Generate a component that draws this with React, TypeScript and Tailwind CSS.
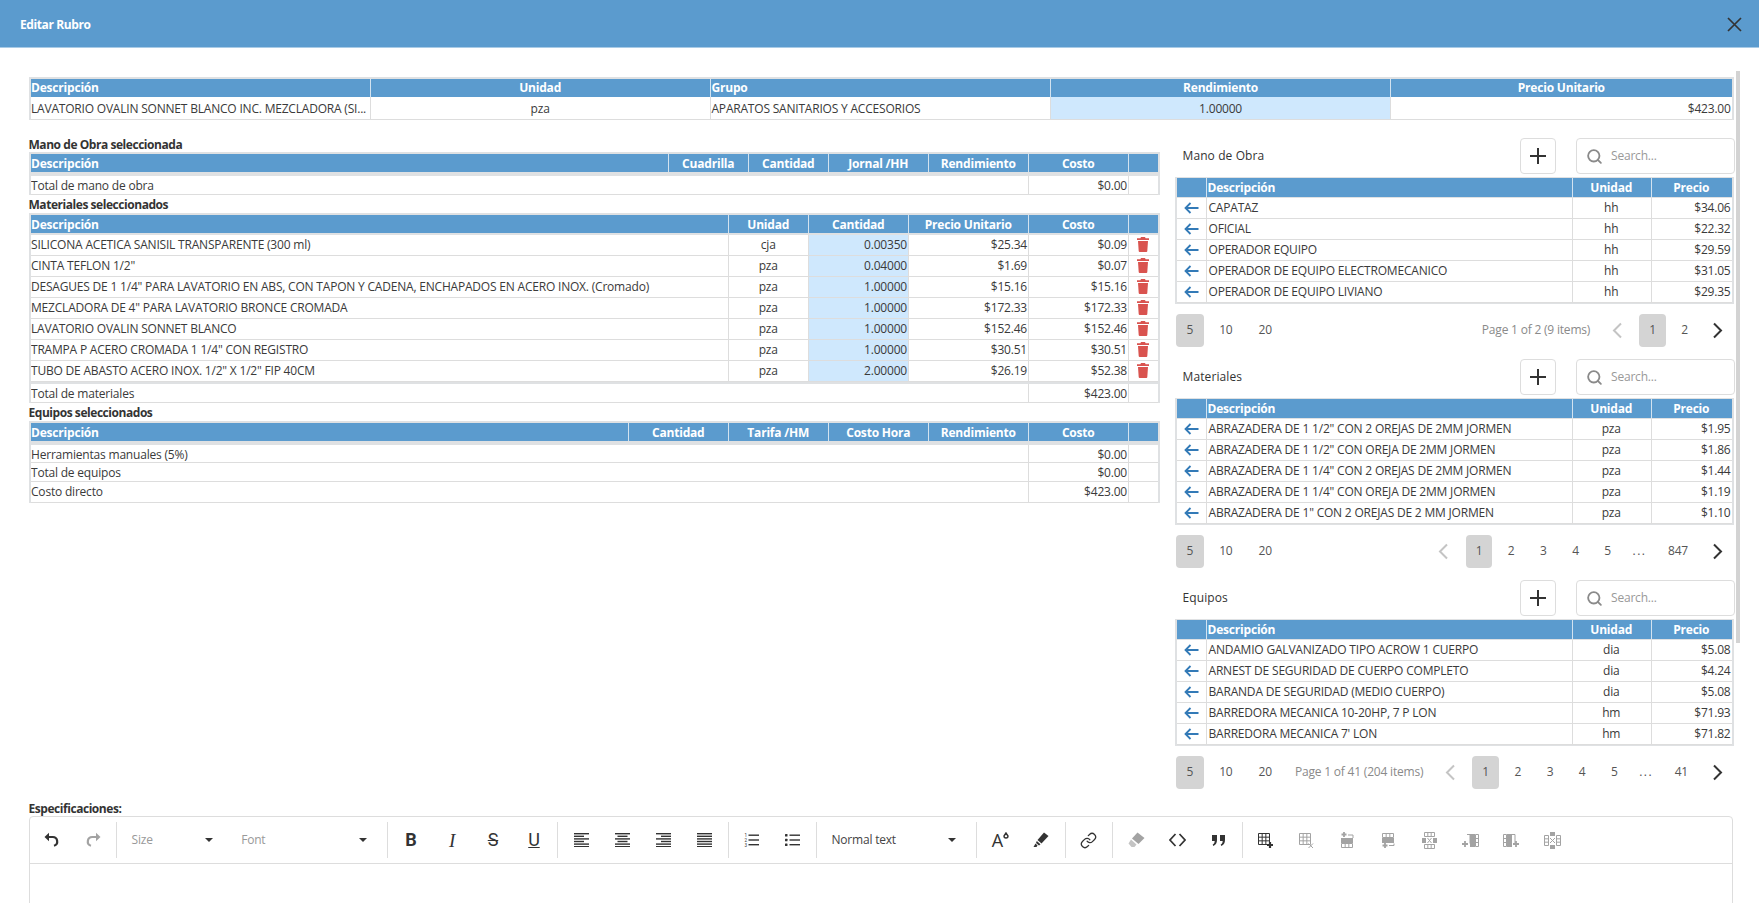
import { Link, Search } from 'lucide-react';
import type { ReactNode } from 'react';

const headBlue = 'bg-[#5b9bce]';

function Th({ children, left, last }: { children?: ReactNode; left?: boolean; last?: boolean }) {
  return (
    <th
      className={`h-[18.500px] ${headBlue} overflow-hidden whitespace-nowrap pb-0 pl-[0.500px] pr-[1px] pt-[1px] text-[12px] font-bold leading-none text-white ${left ? 'text-left' : 'text-center'} ${last ? '' : 'border-r border-[#d3e3f0]'}`}
    >
      {children}
    </th>
  );
}

function Td({
  children,
  align = 'left',
  edit,
  last,
  span,
  h = 'h-[21px] pt-0',
}: {
  children?: ReactNode;
  align?: 'left' | 'center' | 'right';
  edit?: boolean;
  last?: boolean;
  span?: number;
  h?: string;
}) {
  const alignClass = align === 'left' ? 'text-left' : align === 'center' ? 'text-center' : 'text-right';
  return (
    <td
      colSpan={span}
      className={`${h} overflow-hidden whitespace-nowrap border-b border-[#dddddd] pb-0 pl-[0.500px] pr-[1px] leading-none ${alignClass} ${last ? '' : 'border-r'} ${edit ? 'bg-[#cfe8fd]' : 'bg-white'}`}
    >
      {children}
    </td>
  );
}

function Bar({ span, h }: { span: number; h: string }) {
  return (
    <tr>
      <td colSpan={span} className={`${h} bg-[#dfe1e3] p-0`} />
    </tr>
  );
}

function Cols({ widths }: { widths: (number | null)[] }) {
  return (
    <colgroup>
      {widths.map((w, i) => (
        <col key={i} style={w ? { width: w } : undefined} />
      ))}
    </colgroup>
  );
}

function TableBox({ children, pad }: { children: ReactNode; pad?: boolean }) {
  return (
    <div className={`border-x-2 border-[#dfe1e3] bg-[#dfe1e3] pt-[1.500px] ${pad ? 'pb-[1px]' : ''}`}>
      <table className="w-full table-fixed border-separate border-spacing-0">{children}</table>
    </div>
  );
}

function Title({ children, h }: { children: ReactNode; h: string }) {
  return <div className={`${h} flex items-center text-[12px] font-bold leading-none tracking-[-0.450px] text-[#333]`}>{children}</div>;
}

function Trash() {
  return (
    <svg width="12" height="15" viewBox="0 0 12 15" className="mx-auto block" fill="#d9534f">
      <path d="M4 0h4l.6 1.2H12v1.8H0V1.2h3.4z" />
      <path d="M1 4h10l-.7 10a1 1 0 0 1-1 1H2.700a1 1 0 0 1-1-1z" />
    </svg>
  );
}

function BackArrow() {
  return (
    <svg width="15" height="12" viewBox="0 0 15 12" className="mx-auto block" fill="none" stroke="#337ab7" strokeWidth="1.800">
      <path d="M14.500 6H1.500M6.500 1 1.500 6l5 5" />
    </svg>
  );
}

function Chevron({ right, muted }: { right?: boolean; muted?: boolean }) {
  return (
    <span className={`flex h-[33px] w-[27px] items-center justify-center ${right ? '' : 'mr-[3px]'}`}>
      <svg width="11" height="17" viewBox="0 0 11 17" fill="none" stroke={muted ? '#c4c4c4' : '#333333'} strokeWidth="2">
        <path d={right ? 'M2 1.500 9 8.500 2 15.500' : 'M9 1.500 2 8.500 9 15.500'} />
      </svg>
    </span>
  );
}

function Pager({ info, pages, last }: { info?: string; pages?: string[]; last: string }) {
  const list = pages ?? ['1', '2'];
  return (
    <div className="mt-[10px] flex h-[33px] items-center justify-between pl-[1px] pr-[4.500px]">
      <div className="flex items-center gap-[5px] text-[#555]">
        <span className="flex h-[33px] items-center rounded-[4px] bg-[#d4d4d4] px-[10.500px]">5</span>
        <span className="px-[10.500px]">10</span>
        <span className="px-[10.500px]">20</span>
      </div>
      <div className="flex items-center gap-[5.500px] text-[#555]">
        {info && <span className="mr-[8px] text-[#8a8a8a]">{info}</span>}
        <Chevron muted />
        {list.map((p, i) => (
          <span key={p} className={`flex h-[33px] items-center rounded-[4px] px-[10px] ${i === 0 ? 'bg-[#d4d4d4]' : ''}`}>
            {p}
          </span>
        ))}
        {pages && <span className="w-[26px] text-center tracking-[1.500px]">...</span>}
        {pages && <span className="px-[10px]">{last}</span>}
        <Chevron right />
      </div>
    </div>
  );
}

function Catalog({
  title,
  rows,
  info,
  pages,
  last = '',
}: {
  title: string;
  rows: [string, string, string][];
  info?: string;
  pages?: string[];
  last?: string;
}) {
  return (
    <section className="mb-[12.500px] w-[560px]">
      <div className="flex h-[35.500px] items-center">
        <span className="flex-1 pl-[7.500px] tracking-[0.100px] text-[#333]">{title}</span>
        <button className="flex h-[35.500px] w-[35.500px] items-center justify-center rounded-[4px] border border-[#dddddd]">
          <svg width="16" height="16" viewBox="0 0 16 16" stroke="#333333" strokeWidth="2">
            <path d="M8 0v16M0 8h16" />
          </svg>
        </button>
        <div className="ml-[20.500px] flex h-[35.500px] w-[159px] items-center rounded-[4px] border border-[#dddddd] pl-[9px]">
          <Search size={17} color="#8a8a8a" strokeWidth={2.600} />
          <span className="ml-[8px] text-[#999]">Search...</span>
        </div>
      </div>
      <div className="mt-[3px] w-[558.500px]">
        <TableBox pad>
          <Cols widths={[30, null, 79, 80]} />
          <thead>
            <tr>
              <Th />
              <Th left>Descripción</Th>
              <Th>Unidad</Th>
              <Th last>Precio</Th>
            </tr>
          </thead>
          <tbody>
            <Bar span={4} h="h-[1px]" />
            {rows.map((r) => (
              <tr key={r[0]}>
                <Td>
                  <BackArrow />
                </Td>
                <Td>
                  <span className="ml-[1px]">{r[0]}</span>
                </Td>
                <Td align="center">{r[1]}</Td>
                <Td align="right" last>
                  {r[2]}
                </Td>
              </tr>
            ))}
          </tbody>
        </TableBox>
      </div>
      <Pager info={info} pages={pages} last={last} />
    </section>
  );
}

const materials: [string, string, string, string, string][] = [
  ['SILICONA ACETICA SANISIL TRANSPARENTE (300 ml)', 'cja', '0.00350', '$25.34', '$0.09'],
  ['CINTA TEFLON 1/2"', 'pza', '0.04000', '$1.69', '$0.07'],
  ['DESAGUES DE 1 1/4" PARA LAVATORIO EN ABS, CON TAPON Y CADENA, ENCHAPADOS EN ACERO INOX. (Cromado)', 'pza', '1.00000', '$15.16', '$15.16'],
  ['MEZCLADORA DE 4" PARA LAVATORIO BRONCE CROMADA', 'pza', '1.00000', '$172.33', '$172.33'],
  ['LAVATORIO OVALIN SONNET BLANCO', 'pza', '1.00000', '$152.46', '$152.46'],
  ['TRAMPA P ACERO CROMADA 1 1/4" CON REGISTRO', 'pza', '1.00000', '$30.51', '$30.51'],
  ['TUBO DE ABASTO ACERO INOX. 1/2" X 1/2" FIP 40CM', 'pza', '2.00000', '$26.19', '$52.38'],
];

const labor: [string, string, string][] = [
  ['CAPATAZ', 'hh', '$34.06'],
  ['OFICIAL', 'hh', '$22.32'],
  ['OPERADOR EQUIPO', 'hh', '$29.59'],
  ['OPERADOR DE EQUIPO ELECTROMECANICO', 'hh', '$31.05'],
  ['OPERADOR DE EQUIPO LIVIANO', 'hh', '$29.35'],
];

const catalogMaterials: [string, string, string][] = [
  ['ABRAZADERA DE 1 1/2" CON 2 OREJAS DE 2MM JORMEN', 'pza', '$1.95'],
  ['ABRAZADERA DE 1 1/2" CON OREJA DE 2MM JORMEN', 'pza', '$1.86'],
  ['ABRAZADERA DE 1 1/4" CON 2 OREJAS DE 2MM JORMEN', 'pza', '$1.44'],
  ['ABRAZADERA DE 1 1/4" CON OREJA DE 2MM JORMEN', 'pza', '$1.19'],
  ['ABRAZADERA DE 1" CON 2 OREJAS DE 2 MM JORMEN', 'pza', '$1.10'],
];

const equipment: [string, string, string][] = [
  ['ANDAMIO GALVANIZADO TIPO ACROW 1 CUERPO', 'dia', '$5.08'],
  ['ARNEST DE SEGURIDAD DE CUERPO COMPLETO', 'dia', '$4.24'],
  ['BARANDA DE SEGURIDAD (MEDIO CUERPO)', 'dia', '$5.08'],
  ['BARREDORA MECANICA 10-20HP, 7 P LON', 'hm', '$71.93'],
  ["BARREDORA MECANICA 7' LON", 'hm', '$71.82'],
];

function Tool({ children }: { children: ReactNode }) {
  return <span className="mx-[2.500px] flex h-[36px] w-[36px] shrink-0 items-center justify-center text-[#333]">{children}</span>;
}

function Sep() {
  return <span className="mx-[2.750px] h-[36px] w-px shrink-0 bg-[#dddddd]" />;
}

function Select({ label, w, dark }: { label: string; w: string; dark?: boolean }) {
  return (
    <span className={`flex h-[36px] shrink-0 items-center justify-between pl-[11.500px] pr-[17px] ${w} ${dark ? 'text-[#444]' : 'text-[#999]'}`}>
      {label}
      <svg width="8" height="4" viewBox="0 0 8 4" fill="#333333">
        <path d="M0 0h8L4 4z" />
      </svg>
    </span>
  );
}

function Lines({ rows }: { rows: [number, number][] }) {
  return (
    <svg width="15" height="14" viewBox="0 0 15 14" fill="#333333">
      {rows.map(([x, w], i) => (
        <rect key={i} x={x} y={i * 2.600} width={w} height="1.400" />
      ))}
    </svg>
  );
}

function TableIcon({ kind, muted }: { kind: number; muted?: boolean }) {
  const c = muted ? '#a3a3a3' : '#333333';
  const grid = (x: number, y: number, w: number, h: number, cols: number, rows: number) => {
    const p: string[] = [`M${x} ${y}h${w}v${h}h${-w}z`];
    for (let i = 1; i < cols; i++) p.push(`M${x + (w * i) / cols} ${y}v${h}`);
    for (let i = 1; i < rows; i++) p.push(`M${x} ${y + (h * i) / rows}h${w}`);
    return p.join('');
  };
  return (
    <svg width="17" height="17" viewBox="0 0 17 17" fill="none" stroke={c} strokeWidth="1">
      {kind === 0 && (
        <>
          <path d={grid(1.500, 1.500, 11, 11, 3, 3)} />
          <path d="M13 10v6M10 13h6" strokeWidth="2.200" />
        </>
      )}
      {kind === 1 && (
        <>
          <path d={grid(1.500, 1.500, 11, 11, 3, 3)} />
          <path d="M10.500 11.500l4.500 4.500M15 11.500l-4.500 4.500" stroke="#a3a3a3" />
        </>
      )}
      {kind === 2 && (
        <>
          <path d="M5 0v5M2.500 2.500h5" strokeWidth="1.800" />
          <path d="M9 3h5v3" />
          <rect x="2" y="6" width="12" height="5" fill={c} stroke="none" />
          <path d={grid(2.500, 11.500, 11, 4, 3, 1)} />
        </>
      )}
      {kind === 3 && (
        <>
          <path d={grid(2.500, 1.500, 11, 4, 3, 1)} />
          <rect x="2" y="6" width="12" height="5" fill={c} stroke="none" />
          <path d="M5 11v5M2.500 13.500h5" strokeWidth="1.800" />
          <path d="M9 13.500h5v-2" />
        </>
      )}
      {kind === 4 && (
        <>
          <path d={grid(3.500, 0.500, 10, 4, 3, 1)} />
          <path d={grid(3.500, 12.500, 10, 4, 3, 1)} />
          <rect x="1" y="6" width="4" height="5" fill={c} stroke="none" />
          <rect x="12" y="6" width="4" height="5" fill={c} stroke="none" />
          <path d="M6.500 6l4 5M10.500 6l-4 5" />
        </>
      )}
      {kind === 5 && (
        <>
          <path d="M5 2.500h3v9" />
          <path d="M3 9v6M0 12h6" strokeWidth="1.800" />
          <rect x="8" y="2" width="5" height="13" fill={c} stroke="none" />
          <path d={grid(13.500, 2.500, 3, 12, 1, 3)} />
        </>
      )}
      {kind === 6 && (
        <>
          <path d={grid(0.500, 2.500, 3, 12, 1, 3)} />
          <rect x="4" y="2" width="5" height="13" fill={c} stroke="none" />
          <path d="M9 2.500h3v9" />
          <path d="M13 9v6M10 12h6" strokeWidth="1.800" />
        </>
      )}
      {kind === 7 && (
        <>
          <path d={grid(0.500, 3.500, 4, 10, 1, 3)} />
          <path d={grid(12.500, 3.500, 4, 10, 1, 3)} />
          <rect x="6" y="0" width="5" height="4" fill={c} stroke="none" />
          <rect x="6" y="13" width="5" height="4" fill={c} stroke="none" />
          <path d="M6 6l5 5M11 6l-5 5" />
        </>
      )}
    </svg>
  );
}

function Toolbar() {
  return (
    <div className="flex h-[47px] items-center border-b border-[#dddddd] pl-[2px]">
      <Tool>
        <svg width="16" height="16" viewBox="0 0 16 16" fill="none" stroke="#333333" strokeWidth="2.200">
          <path d="M4.500 5H8.500a4.500 4.500 0 0 1 1.500 8.800" />
          <path d="M0.500 5l4.500-4.300v8.600z" fill="#333333" stroke="none" />
        </svg>
      </Tool>
      <Tool>
        <svg width="16" height="16" viewBox="0 0 16 16" fill="none" stroke="#a3a3a3" strokeWidth="2.200">
          <path d="M11.500 5H7.500a4.500 4.500 0 0 0-1.500 8.800" />
          <path d="M15.500 5l-4.500-4.300v8.600z" fill="#a3a3a3" stroke="none" />
        </svg>
      </Tool>
      <Sep />
      <Select label="Size" w="w-[109.700px]" />
      <Select label="Font" w="w-[154.300px]" />
      <Sep />
      <Tool>
        <span className="font-['Roboto',sans-serif] text-[18px] font-bold leading-none">B</span>
      </Tool>
      <Tool>
        <span className="font-['Liberation_Serif',serif] text-[19px] italic leading-none">I</span>
      </Tool>
      <Tool>
        <span className="font-['Roboto',sans-serif] text-[18px] font-normal leading-none line-through decoration-[1.200px]">S</span>
      </Tool>
      <Tool>
        <span className="font-['Roboto',sans-serif] text-[18px] font-normal leading-none underline">U</span>
      </Tool>
      <Sep />
      <Tool>
        <Lines rows={[[0, 15], [0, 10], [0, 15], [0, 10], [0, 15], [0, 15]]} />
      </Tool>
      <Tool>
        <Lines rows={[[0, 15], [2.500, 10], [0, 15], [2.500, 10], [0, 15], [0, 15]]} />
      </Tool>
      <Tool>
        <Lines rows={[[0, 15], [5, 10], [0, 15], [5, 10], [0, 15], [0, 15]]} />
      </Tool>
      <Tool>
        <Lines rows={[[0, 15], [0, 15], [0, 15], [0, 15], [0, 15], [0, 15]]} />
      </Tool>
      <Sep />
      <Tool>
        <svg width="15" height="14" viewBox="0 0 15 14" fill="#333333">
          <rect x="4.500" y="1.500" width="10.500" height="1.400" />
          <rect x="4.500" y="6.300" width="10.500" height="1.400" />
          <rect x="4.500" y="11" width="10.500" height="1.400" />
          <text x="0.500" y="4" fontSize="4.500" fontFamily="Roboto, sans-serif">1</text>
          <text x="0.500" y="8.800" fontSize="4.500" fontFamily="Roboto, sans-serif">2</text>
          <text x="0.500" y="13.500" fontSize="4.500" fontFamily="Roboto, sans-serif">3</text>
        </svg>
      </Tool>
      <Tool>
        <svg width="15" height="14" viewBox="0 0 15 14" fill="#333333">
          <rect x="4.500" y="1.500" width="10.500" height="1.400" />
          <rect x="4.500" y="6.300" width="10.500" height="1.400" />
          <rect x="4.500" y="11" width="10.500" height="1.400" />
          <rect x="0" y="1" width="2.500" height="2.500" rx="0.500" />
          <rect x="0" y="5.800" width="2.500" height="2.500" rx="0.500" />
          <rect x="0" y="10.500" width="2.500" height="2.500" rx="0.500" />
        </svg>
      </Tool>
      <Sep />
      <Select label="Normal text" w="w-[153.400px]" dark />
      <Sep />
      <Tool>
        <span className="flex items-start">
          <span className="text-[18px] leading-none">A</span>
          <svg width="6" height="7" viewBox="0 0 6 7" className="mt-[1px]" fill="none" stroke="#333333" strokeWidth="1.400">
            <path d="M3 1 1 4a2 2 0 1 0 4 0z" />
          </svg>
        </span>
      </Tool>
      <Tool>
        <svg width="16" height="16" viewBox="0 0 16 16" fill="#333333">
          <path d="M11 0.500 15.500 4 8.500 11.500 4.500 8z" />
          <path d="M3.800 9 7.500 12.300 6 13.500 3 11z" />
          <path d="M2.500 11.500 4.500 13.500 3.500 15H0.500z" />
        </svg>
      </Tool>
      <Sep />
      <Tool>
        <Link size={17} color="#333333" strokeWidth={1.800} />
      </Tool>
      <Sep />
      <Tool>
        <svg width="17" height="16" viewBox="0 0 17 16" fill="#a3a3a3">
          <path d="M9.500 0.500 16.500 6 10.500 12 4 6.500z" />
          <path d="M3 7.500 8.500 12.500 6.500 15H3.500L0.500 11.500z" fill="#c4c4c4" />
        </svg>
      </Tool>
      <Tool>
        <svg width="17" height="14" viewBox="0 0 17 14" fill="none" stroke="#333333" strokeWidth="1.700">
          <path d="M6.500 1 1 7l5.500 6M10.500 1 16 7l-5.500 6" />
        </svg>
      </Tool>
      <Tool>
        <svg width="13" height="11" viewBox="0 0 13 11" fill="#333333">
          <path d="M0 0h5v5C5 8 3.800 10 1.200 11L0.700 9.500C2 9 2.600 8 2.700 6H0zM8 0h5v5c0 3-1.200 5-3.800 6L8.700 9.500C10 9 10.600 8 10.700 6H8z" />
        </svg>
      </Tool>
      <Sep />
      <Tool>
        <TableIcon kind={0} />
      </Tool>
      {[1, 2, 3, 4, 5, 6, 7].map((k) => (
        <Tool key={k}>
          <TableIcon kind={k} muted />
        </Tool>
      ))}
    </div>
  );
}

export default function App() {
  return (
    <div className="h-[919px] w-[1759px] overflow-hidden bg-white font-['Open_Sans',sans-serif] text-[12px] tracking-[-0.200px] text-[#3a3a3a]">
      <header className="flex h-[48px] items-center justify-between border-b border-[#a9cbe6] bg-[#5b9bce] pl-[20px] pr-[17px] text-white">
        <span className="mt-[3px] text-[12px] font-bold tracking-[-0.400px]">Editar Rubro</span>
        <svg width="15" height="15" viewBox="0 0 15 15" className="mt-[1px]" stroke="#333333" strokeWidth="1.700">
          <path d="M1 1l13 13M14 1 1 14" />
        </svg>
      </header>

      <main className="relative h-[855px] overflow-hidden pl-[28.500px] pt-[29px]">
        <span className="absolute left-[1736px] top-[23px] h-[572px] w-[4px] bg-[#d3d3d3]" />

        <div className="w-[1705.200px]">
          <TableBox>
            <thead>
              <tr>
                <Th left>Descripción</Th>
                <Th>Unidad</Th>
                <Th left>Grupo</Th>
                <Th>Rendimiento</Th>
                <Th last>Precio Unitario</Th>
              </tr>
            </thead>
            <tbody>
              <tr>
                <Td h="h-[22.500px] pt-[2px]">LAVATORIO OVALIN SONNET BLANCO INC. MEZCLADORA (SI...</Td>
                <Td align="center" h="h-[22.500px] pt-[2px]">
                  pza
                </Td>
                <Td h="h-[22.500px] pt-[2px]">APARATOS SANITARIOS Y ACCESORIOS</Td>
                <Td align="center" edit h="h-[22.500px] pt-[2px]">
                  1.00000
                </Td>
                <Td align="right" last h="h-[22.500px] pt-[2px]">
                  $423.00
                </Td>
              </tr>
            </tbody>
          </TableBox>
        </div>

        <div className="mt-[17.500px] flex gap-[15px]">
          <div className="w-[1131.500px]">
            <Title h="h-[15.300px]">Mano de Obra seleccionada</Title>
            <TableBox>
              <Cols widths={[null, 80, 80, 100, 100, 100, 29]} />
              <thead>
                <tr>
                  <Th left>Descripción</Th>
                  <Th>Cuadrilla</Th>
                  <Th>Cantidad</Th>
                  <Th>Jornal /HH</Th>
                  <Th>Rendimiento</Th>
                  <Th>Costo</Th>
                  <Th last />
                </tr>
              </thead>
              <tbody>
                <Bar span={7} h="h-[3.400px]" />
                <tr>
                  <Td span={5} h="h-[19.600px] pt-[2px]">
                    Total de mano de obra
                  </Td>
                  <Td align="right" h="h-[19.600px] pt-[2px]">
                    $0.00
                  </Td>
                  <Td last h="h-[19.600px] pt-[2px]" />
                </tr>
              </tbody>
            </TableBox>

            <Title h="h-[18px] pt-[2px]">Materiales seleccionados</Title>
            <TableBox>
              <Cols widths={[null, 80, 100, 120, 100, 29]} />
              <thead>
                <tr>
                  <Th left>Descripción</Th>
                  <Th>Unidad</Th>
                  <Th>Cantidad</Th>
                  <Th>Precio Unitario</Th>
                  <Th>Costo</Th>
                  <Th last />
                </tr>
              </thead>
              <tbody>
                <Bar span={6} h="h-[1.700px]" />
                {materials.map((m) => (
                  <tr key={m[0]}>
                    <Td>{m[0]}</Td>
                    <Td align="center">{m[1]}</Td>
                    <Td align="right" edit>
                      {m[2]}
                    </Td>
                    <Td align="right">{m[3]}</Td>
                    <Td align="right">{m[4]}</Td>
                    <Td last>
                      <Trash />
                    </Td>
                  </tr>
                ))}
                <Bar span={6} h="h-[2px]" />
                <tr>
                  <Td span={4} h="h-[19.300px] pt-[2px]">
                    Total de materiales
                  </Td>
                  <Td align="right" h="h-[19.300px] pt-[2px]">
                    $423.00
                  </Td>
                  <Td last h="h-[19.300px] pt-[2px]" />
                </tr>
              </tbody>
            </TableBox>

            <Title h="h-[18.200px] pt-[2px]">Equipos seleccionados</Title>
            <TableBox>
              <Cols widths={[null, 100, 100, 100, 100, 100, 29]} />
              <thead>
                <tr>
                  <Th left>Descripción</Th>
                  <Th>Cantidad</Th>
                  <Th>Tarifa /HM</Th>
                  <Th>Costo Hora</Th>
                  <Th>Rendimiento</Th>
                  <Th>Costo</Th>
                  <Th last />
                </tr>
              </thead>
              <tbody>
                <Bar span={7} h="h-[3.500px]" />
                <tr>
                  <Td span={5} h="h-[18.300px] pt-[2px]">
                    Herramientas manuales (5%)
                  </Td>
                  <Td align="right" h="h-[18.300px] pt-[2px]">
                    $0.00
                  </Td>
                  <Td last h="h-[18.300px] pt-[2px]" />
                </tr>
                <tr>
                  <Td span={5} h="h-[19px] pt-[2px]">
                    Total de equipos
                  </Td>
                  <Td align="right" h="h-[19px] pt-[2px]">
                    $0.00
                  </Td>
                  <Td last h="h-[19px] pt-[2px]" />
                </tr>
                <tr>
                  <Td span={5}>Costo directo</Td>
                  <Td align="right">$423.00</Td>
                  <Td last />
                </tr>
              </tbody>
            </TableBox>
          </div>

          <div className="flex-1 pt-[1.300px]">
            <Catalog title="Mano de Obra" rows={labor} info="Page 1 of 2 (9 items)" />
            <Catalog title="Materiales" rows={catalogMaterials} pages={['1', '2', '3', '4', '5']} last="847" />
            <Catalog title="Equipos" rows={equipment} info="Page 1 of 41 (204 items)" pages={['1', '2', '3', '4', '5']} last="41" />
          </div>
        </div>

        <div className="flex h-[15.100px] items-center text-[12px] font-bold leading-none tracking-[-0.450px] text-[#333]">Especificaciones:</div>
        <div className="h-[200px] w-[1704.500px] rounded-[4px] border border-[#dddddd]">
          <Toolbar />
        </div>
      </main>
    </div>
  );
}
